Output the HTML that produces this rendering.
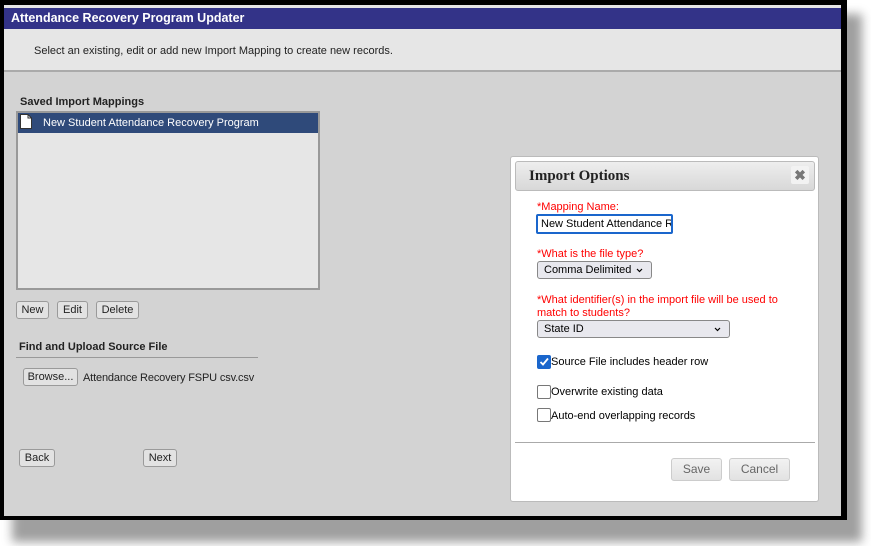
<!DOCTYPE html>
<html><head><style>
*{box-sizing:border-box;margin:0;padding:0}
body{width:871px;height:546px;background:#fff;font-family:"Liberation Sans",Arial,sans-serif;font-size:11px;color:#222;position:relative;overflow:hidden}
.abs{position:absolute}
.btn{position:absolute;border:1px solid #9a9a9a;border-radius:3px;background:#e2e2e2;font-size:11px;text-align:center;line-height:16px;height:18px}
.red{color:#f00;font-size:11px;position:absolute}
.cb{position:absolute;width:14px;height:14px;border:1px solid #777;border-radius:2px;background:#fff}
</style></head><body>
<div class="abs" style="left:12px;top:14px;width:850px;height:528px;background:#777;filter:blur(5px);opacity:.7"></div>
<div class="abs" style="left:0;top:0;width:847px;height:520px;background:#000"></div>
<div class="abs" style="left:4px;top:5px;width:837px;height:511px;background:#d3d3d3"></div>
<div class="abs" style="left:4px;top:5px;width:837px;height:3px;background:#e6e6e6"></div>
<div class="abs" style="left:4px;top:8px;width:837px;height:21px;background:#333388;color:#fff;font-weight:bold;font-size:12.5px;padding:3px 0 0 7px">Attendance Recovery Program Updater</div>
<div class="abs" style="left:4px;top:29px;width:837px;height:43px;background:#e6e6e6;border-bottom:2px solid #aaa;font-size:11px;padding:16px 0 0 30px;color:#222">Select an existing, edit or add new Import Mapping to create new records.</div>
<div class="abs" style="left:20px;top:96px;font-weight:bold">Saved Import Mappings</div>
<div class="abs" style="left:16px;top:111px;width:304px;height:179px;border:2px solid #999;background:#e6e6e6"></div>
<div class="abs" style="left:18px;top:113px;width:300px;height:20px;background:#2f4a7a;color:#fff;padding:4px 0 0 25px">New Student Attendance Recovery Program</div>
<svg class="abs" style="left:20px;top:114px" width="12" height="15" viewBox="0 0 12 15"><path d="M0.5 0.5H8L11.5 4V14.5H0.5Z" fill="#fff" stroke="#333"/><path d="M8 0.5V4H11.5" fill="none" stroke="#333"/></svg>
<div class="btn" style="left:16px;top:301px;width:33px">New</div>
<div class="btn" style="left:57px;top:301px;width:31px">Edit</div>
<div class="btn" style="left:96px;top:301px;width:43px">Delete</div>
<div class="abs" style="left:19px;top:341px;font-weight:bold">Find and Upload Source File</div>
<div class="abs" style="left:16px;top:357px;width:242px;height:1px;background:#999"></div>
<div class="btn" style="left:23px;top:368px;width:55px">Browse...</div>
<div class="abs" style="left:83px;top:372px;letter-spacing:-0.15px">Attendance Recovery FSPU csv.csv</div>
<div class="btn" style="left:19px;top:449px;width:36px">Back</div>
<div class="btn" style="left:143px;top:449px;width:34px">Next</div>

<div class="abs" style="left:510px;top:156px;width:309px;height:346px;background:#fff;border:1px solid #bbb;border-radius:3px"></div>
<div class="abs" style="left:515px;top:161px;width:300px;height:30px;background:linear-gradient(#eee,#d8d8d8);border:1px solid #bbb;border-radius:3px;font-family:'Liberation Serif',serif;font-weight:bold;font-size:15px;padding:6px 0 0 13px;color:#222">Import Options</div>
<div class="abs" style="left:791px;top:166px;width:18px;height:18px;background:#f2f2f2;border-radius:2px;color:#777;font-weight:bold;font-size:14px;text-align:center;line-height:18px">✖</div>
<div class="red" style="left:537px;top:201px">*Mapping Name:</div>
<div class="abs" style="left:536px;top:214px;width:137px;height:20px;border:2px solid #1a66cc;border-radius:2px;padding:2px 0 0 3px;overflow:hidden;white-space:nowrap;color:#000">New Student Attendance R</div>
<div class="red" style="left:537px;top:248px">*What is the file type?</div>
<div class="abs" style="left:537px;top:261px;width:115px;height:18px;border:1px solid #888;border-radius:3px;background:#e8e8ee;padding:2px 0 0 6px;color:#000">Comma Delimited <svg style="position:absolute;right:8px;top:6px" width="7" height="5"><path d="M1 1L3.5 3.5L6 1" fill="none" stroke="#000" stroke-width="1.2"/></svg></div>
<div class="red" style="left:537px;top:294px;line-height:13px">*What identifier(s) in the import file will be used to<br>match to students?</div>
<div class="abs" style="left:537px;top:320px;width:193px;height:18px;border:1px solid #888;border-radius:3px;background:#e8e8ee;padding:2px 0 0 6px;color:#000">State ID<svg style="position:absolute;right:8px;top:6px" width="7" height="5"><path d="M1 1L3.5 3.5L6 1" fill="none" stroke="#000" stroke-width="1.2"/></svg></div>
<div class="cb" style="left:537px;top:355px;background:#1a66cc;border-color:#1a66cc"><svg width="12" height="12" style="position:absolute;left:0;top:0"><path d="M2.5 6L5 8.5L10 2.5" fill="none" stroke="#fff" stroke-width="1.8"/></svg></div>
<div class="abs" style="left:551px;top:356px;color:#000">Source File includes header row</div>
<div class="cb" style="left:537px;top:385px"></div>
<div class="abs" style="left:551px;top:386px;color:#000">Overwrite existing data</div>
<div class="cb" style="left:537px;top:408px"></div>
<div class="abs" style="left:551px;top:410px;color:#000">Auto-end overlapping records</div>
<div class="abs" style="left:515px;top:442px;width:300px;height:1px;background:#aaa"></div>
<div class="btn" style="left:671px;top:458px;width:51px;height:23px;line-height:21px;color:#666;font-size:12px;background:linear-gradient(#f2f2f2,#e2e2e2);border-color:#ccc">Save</div>
<div class="btn" style="left:729px;top:458px;width:61px;height:23px;line-height:21px;color:#666;font-size:12px;background:linear-gradient(#f2f2f2,#e2e2e2);border-color:#ccc">Cancel</div>
</body></html>
